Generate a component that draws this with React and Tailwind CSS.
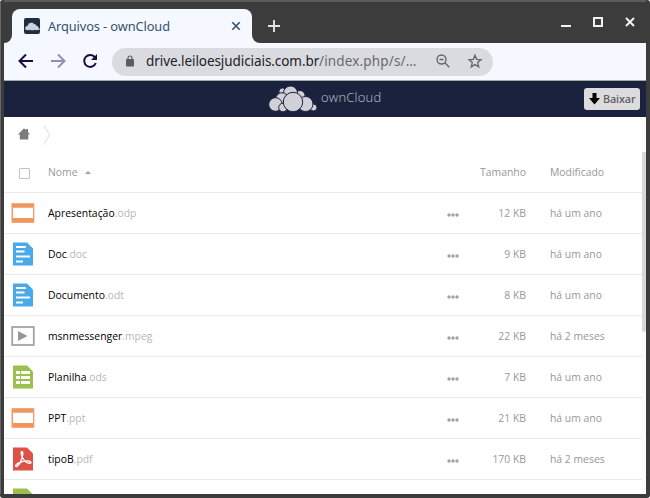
import React from 'react';

const rows = [
  { name: 'Apresentação', ext: '.odp', size: '12 KB', date: 'há um ano', type: 'slides' },
  { name: 'Doc', ext: '.doc', size: '9 KB', date: 'há um ano', type: 'doc' },
  { name: 'Documento', ext: '.odt', size: '8 KB', date: 'há um ano', type: 'doc' },
  { name: 'msnmessenger', ext: '.mpeg', size: '22 KB', date: 'há 2 meses', type: 'video' },
  { name: 'Planilha', ext: '.ods', size: '7 KB', date: 'há um ano', type: 'sheet' },
  { name: 'PPT', ext: '.ppt', size: '21 KB', date: 'há um ano', type: 'slides' },
  { name: 'tipoB', ext: '.pdf', size: '170 KB', date: 'há 2 meses', type: 'pdf' },
  { name: '', ext: '', size: '', date: '', type: 'sheet' },
];

function FileIcon({ type }) {
  return (
    <svg width="24" height="24" viewBox="0 0 24 24" className="block shrink-0">
      {type === 'slides' && (
        <>
          <rect x="0.4" y="2" width="23" height="20" rx="0.8" fill="#f3a980" />
          <rect x="1.300" y="3" width="21.200" height="18" fill="#f0955c" />
          <rect x="2" y="6.800" width="20" height="10.200" fill="#fff" />
        </>
      )}
      {type === 'video' && (
        <>
          <rect x="1.2" y="3" width="21.6" height="18" fill="#fff" stroke="#a3a3a3" strokeWidth="1.800" />
          <path d="M7 7v10l9.500-5z" fill="#969696" />
        </>
      )}
      {type === 'doc' && (
        <>
          <path d="M2 .6h14l6 6V23.500H2z" fill="#49a9e9" />
          <path d="M5 5h10M5 9.500h8.500M5 14.500h14M5 19.500h7" stroke="#fff" strokeWidth="1.800" />
        </>
      )}
      {type === 'sheet' && (
        <>
          <path d="M2 .6h14l6 6V23.500H2z" fill="#9bc04b" />
          <path d="M5 6h4v3H5zM10 6h9v3h-9zM5 11h4v3H5zM10 11h9v3h-9zM5 16h4v3H5zM10 16h9v3h-9z" fill="#fff" />
        </>
      )}
      {type === 'pdf' && (
        <>
          <path d="M2 .6h14l6 6V23.500H2z" fill="#de5145" />
          <path
            d="M11 4.500C9.500 4.500 10.200 8 11.700 11c1.600 3 4.500 5.300 7 5.200 2.400-.3 1.100-2.200-2.400-2.300-4-.1-11 2.300-11.600 4.600-.3 1.900 2.500 1.100 4.400-2.700C11.300 12 12.800 4.500 11 4.500z"
            fill="none"
            stroke="#fff"
            strokeWidth="1.400"
          />
        </>
      )}
    </svg>
  );
}

function CloudMark({ stroke = '#1b223d', ...props }) {
  return (
    <svg viewBox="0 0 50 28" {...props}>
      <g fill="#d0d1d8" stroke={stroke} strokeWidth="1">
        <circle cx="14.500" cy="6.500" r="3.600" />
        <circle cx="32" cy="10.500" r="5" />
        <circle cx="22.500" cy="8" r="7" />
        <circle cx="14" cy="14" r="6.300" />
        <circle cx="7.500" cy="19.500" r="6.800" />
        <circle cx="15" cy="22.500" r="4.300" />
        <circle cx="45.500" cy="22.500" r="3.500" />
        <circle cx="37.500" cy="19" r="7.500" />
        <circle cx="25" cy="17" r="9.700" />
      </g>
    </svg>
  );
}

function TitleBar() {
  return (
    <div className="flex h-[43px] border-t-2 border-[#5c5c5c] bg-[#3c3c3c]">
      <div className="flex w-2 items-end bg-[#f5f9ff]">
        <div className="h-full w-2 rounded-br-[8px] bg-[#3c3c3c]" />
      </div>
      <div className="mt-[7px] flex h-[34px] w-[240px] items-center rounded-t-[8px] bg-[#f5f9ff] pl-3 pr-[11px]">
        <div className="flex size-4 items-center justify-center rounded-[2px] bg-[#1d2d44]">
          <CloudMark stroke="none" width="15" height="9" />
        </div>
        <span className="ml-2 whitespace-nowrap font-['Noto_Sans',sans-serif] text-[12.800px] leading-4 tracking-[-0.100px] text-[#35506f]">
          Arquivos - ownCloud
        </span>
        <svg width="10" height="10" viewBox="0 0 10 10" className="ml-auto" stroke="#35506f" strokeWidth="1.600">
          <path d="M1.300 1.300l7.400 7.400M8.700 1.300l-7.400 7.400" />
        </svg>
      </div>
      <div className="flex w-2 items-end bg-[#f5f9ff]">
        <div className="h-full w-2 rounded-bl-[8px] bg-[#3c3c3c]" />
      </div>
      <svg width="12" height="12" viewBox="0 0 12 12" className="ml-2 mt-[18px]" stroke="#e4e4e4" strokeWidth="1.900">
        <path d="M6 0v12M0 6h12" />
      </svg>
      <svg width="76" height="12" viewBox="0 0 76 12" className="ml-auto mr-[10px] mt-[14px]" fill="none" stroke="#f2f2f2">
        <path d="M1 10h10" strokeWidth="2" />
        <rect x="34" y="2" width="8" height="8" strokeWidth="2" />
        <path d="M66 2l8 8M74 2l-8 8" strokeWidth="2" />
      </svg>
    </div>
  );
}

function Toolbar() {
  return (
    <div className="flex h-[38px] items-center border-b border-[#a5aaa8] bg-[#f5f9ff] pl-[14px]">
      <svg width="80" height="16" viewBox="0 0 80 16" fill="none" strokeWidth="2" className="-mt-px shrink-0">
        <path d="M15 8H2M8 1.500L1.500 8L8 14.500" stroke="#1b0847" />
        <path d="M33 8h13M40 1.500L46.500 8L40 14.500" stroke="#958eb2" />
        <path d="M77 4.300A6 6 0 1 0 77.800 10" stroke="#1b0847" />
        <path d="M79 1v6h-6z" fill="#1b0847" />
      </svg>
      <div className="ml-[14px] flex h-7 w-[381px] items-center rounded-full bg-[#dadbe0] pl-[14px] pr-[10px]">
        <svg width="8" height="12" viewBox="0 0 8 12" className="-mt-px shrink-0">
          <path d="M2 5V3a2 2 0 0 1 4 0v2" fill="none" stroke="#5b5c60" strokeWidth="1.200" />
          <rect y="4" width="8" height="7.500" rx="1" fill="#5b5c60" />
        </svg>
        <span className="-mt-px ml-3 flex whitespace-nowrap font-['Noto_Sans',sans-serif] text-[13.500px] leading-5">
          <span className="w-[173px] tracking-[-0.070px] text-[#202124]">drive.leiloesjudiciais.com.br</span>
          <span className="tracking-[0.160px] text-[#686a6f]">/index.php/s/…</span>
        </span>
        <svg width="14" height="14" viewBox="0 0 14 14" className="-mt-px ml-auto shrink-0" fill="none" stroke="#65666b" strokeWidth="1.400">
          <circle cx="5.500" cy="5.500" r="4.500" />
          <path d="M8.800 8.800l4.500 4.500M3.500 5.500h4" />
        </svg>
        <svg width="16" height="16" viewBox="0 0 24 24" className="-mt-px ml-[17px] shrink-0" fill="none" stroke="#65666b" strokeWidth="2">
          <path d="M12 3.500l2.500 6 6.500.6-4.900 4.300 1.500 6.400-5.600-3.400-5.600 3.400 1.500-6.400L3 10.100l6.500-.6z" />
        </svg>
      </div>
    </div>
  );
}

function Header() {
  return (
    <div className="flex h-9 items-center bg-[#1b223d] pl-[264px] pr-[6px]">
      <CloudMark width="50" height="28" className="-mt-px shrink-0" />
      <span className="-mt-[4px] ml-[3px] font-['Open_Sans','Noto_Sans',sans-serif] text-[13px] font-light leading-4 tracking-[0.200px] text-[#c0c3ce]">
        ownCloud
      </span>
      <div className="ml-auto flex h-[22px] w-14 items-center rounded-[3px] bg-[#dcdcde] pl-[5px]">
        <svg width="11" height="12" viewBox="0 0 11 12">
          <path d="M3.500 0h4v5H11l-5.500 6.500L0 5h3.500z" fill="#000" />
        </svg>
        <span className="ml-[3px] font-['Open_Sans','Noto_Sans',sans-serif] text-[10.800px] font-semibold leading-4 tracking-[-0.130px] text-[#606064]">
          Baixar
        </span>
      </div>
    </div>
  );
}

export default function App() {
  return (
    <div className="flex h-[498px] w-[650px] flex-col overflow-hidden rounded-[3px] bg-[#3c3c3c]">
      <div className="border-l border-[#686868] pl-[3px] pr-1">
        <TitleBar />
        <Toolbar />
        <Header />
      </div>
      <div className="flex h-[377px] shrink-0 border-l border-[#686868] pl-[3px] pr-1 font-['Open_Sans','Noto_Sans',sans-serif] text-[10.400px] leading-4 text-[#989898]">
        <div className="h-[377px] w-[638px] overflow-hidden bg-white">
          <div className="flex h-[35px] items-center pl-[14px]">
            <svg width="12" height="12" viewBox="0 0 12 12" className="-mt-[2px]">
              <path d="M6 .3l2 1.800V1h2v3l2 2.500h-1.700v5H1.800v-5H0z" fill="#7c7c7c" />
            </svg>
            <svg width="8" height="20" viewBox="0 0 8 20" className="ml-[13px]" fill="none" stroke="#ddd">
              <path d="M1 .5l5.500 9.500L1 19.500" />
            </svg>
          </div>
          <div className="flex h-[41px] items-center border-b border-[#ebebeb] pl-[15px]">
            <div className="mt-[2px] size-[11px] rounded-[1px] border border-[#c2c2c2] bg-white" />
            <span className="ml-[18px]">Nome</span>
            <svg width="6" height="3" viewBox="0 0 6 3" className="ml-[7px] mt-[1px]">
              <path d="M0 3L3 0l3 3z" fill="#a2a2a2" />
            </svg>
            <span className="ml-auto w-[60px] text-right">Tamanho</span>
            <span className="ml-6 w-[92px]">Modificado</span>
          </div>
          {rows.map((r, i) => (
            <div key={i} className="flex h-[41px] items-center border-b border-[#ebebeb] pl-[7px]">
              <FileIcon type={r.type} />
              <span className="ml-[13px] whitespace-nowrap text-black">
                {r.name}
                <span className="text-[#b8b8b8]">{r.ext}</span>
              </span>
              <svg width="12" height="4" viewBox="0 0 12 4" className="ml-auto mt-[3px]" fill="#a2a2a2">
                <circle cx="2" cy="2" r="1.700" />
                <circle cx="6" cy="2" r="1.700" />
                <circle cx="10" cy="2" r="1.700" />
              </svg>
              <span className="w-[67px] text-right">{r.size}</span>
              <span className="ml-6 w-[92px]">{r.date}</span>
            </div>
          ))}
        </div>
        <div className="flex h-[377px] w-1 bg-[#fcfcfc] pt-[35px]">
          <div className="h-[180px] w-1 rounded-b-[2px] bg-[#d8d8d8]" />
        </div>
      </div>
    </div>
  );
}
